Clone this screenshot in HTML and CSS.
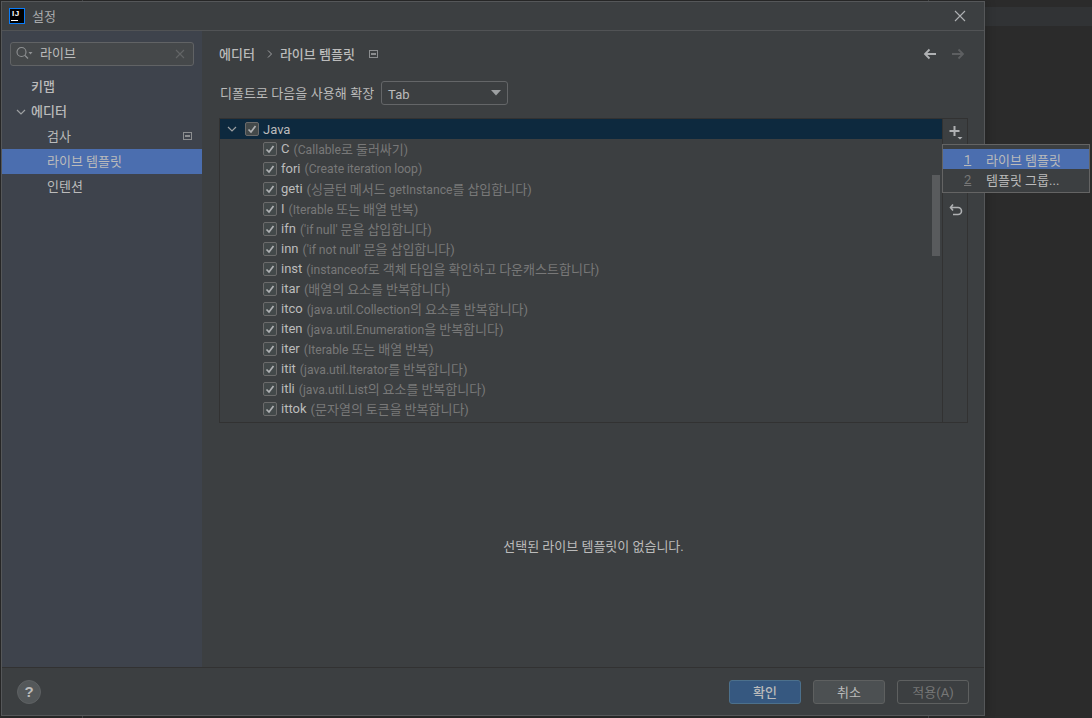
FILE: index.html
```html
<!DOCTYPE html>
<html lang="ko">
<head>
<meta charset="utf-8">
<title>설정</title>
<link rel="stylesheet" href="styles.css">
</head>
<body>
<div class="backdrop"><div class="bg-strip"></div><div class="bg-line left"></div><div class="bg-line right"></div></div>
<div class="dialog">
  <header class="titlebar">
    <div class="logo"><span class="logo-text">IJ</span><span class="logo-bar"></span></div>
    <span class="title">설정</span>
    <svg class="close" width="14" height="14" viewBox="0 0 14 14"><path d="M2 2l10 10M12 2L2 12" stroke="#afb1b3" stroke-width="1.1" fill="none"/></svg>
  </header>
  <div class="main">
    <aside class="sidebar">
      <div class="search">
        <svg width="20" height="16" viewBox="0 0 20 16"><circle cx="5.500" cy="6" r="4.500" stroke="#8f9193" stroke-width="1.100" fill="none"/><path d="M9 9.500l3 3" stroke="#8f9193" stroke-width="1.200"/><path d="M12.500 6h4l-2 2.400z" fill="#8f9193"/></svg>
        <span class="search-text">라이브</span>
        <svg class="search-clear" width="10" height="10" viewBox="0 0 10 10"><path d="M1 1l8 8M9 1L1 9" stroke="#636567" stroke-width="1.100"/></svg>
      </div>
      <nav class="nav">
        <div class="nav-item lvl0">키맵</div>
        <div class="nav-item lvl0"><svg class="nav-chev" width="10" height="6" viewBox="0 0 10 6"><path d="M1 1l4 4 4-4" stroke="#9da0a2" stroke-width="1.200" fill="none"/></svg>에디터</div>
        <div class="nav-item lvl1"><span>검사</span><svg class="nav-mark" width="9" height="8" viewBox="0 0 9 8"><rect x=".5" y=".5" width="8" height="7" fill="none" stroke="#8c8e90"/><rect x="2" y="3" width="5" height="2" fill="#8c8e90"/></svg></div>
        <div class="nav-item lvl1 selected">라이브 템플릿</div>
        <div class="nav-item lvl1">인텐션</div>
      </nav>
    </aside>
    <section class="content">
      <div class="crumbs">
        <span class="crumb">에디터</span>
        <svg class="crumb-sep" width="6" height="8" viewBox="0 0 6 8"><path d="M1 .5L4.500 4 1 7.500" stroke="#a0a2a4" fill="none"/></svg>
        <span class="crumb">라이브 템플릿</span>
        <svg class="crumb-mark" width="9" height="8" viewBox="0 0 9 8"><rect x=".5" y=".5" width="8" height="7" fill="none" stroke="#8c8e90"/><rect x="2" y="3" width="5" height="2" fill="#8c8e90"/></svg>
        <div class="history">
          <svg width="14" height="12" viewBox="0 0 14 12"><path d="M13 6H2M6.500 1.500L2 6l4.500 4.500" stroke="#afb1b3" stroke-width="1.800" fill="none"/></svg>
          <svg width="14" height="12" viewBox="0 0 14 12"><path d="M1 6h11M7.500 1.500L12 6l-4.500 4.500" stroke="#5d5f61" stroke-width="1.800" fill="none"/></svg>
        </div>
      </div>
      <div class="expand-row">
        <label class="expand-label">디폴트로 다음을 사용해 확장</label>
        <div class="combo"><span class="combo-value">Tab</span><svg width="10" height="6" viewBox="0 0 10 6"><path d="M0 0h10L5 5.500z" fill="#9da0a2"/></svg></div>
      </div>
      <div class="tree-panel">
        <div class="tree">
          <div class="tree-group">
            <svg class="tree-chev" width="10" height="6" viewBox="0 0 10 6"><path d="M1 1l4 4 4-4" stroke="#9da0a2" stroke-width="1.200" fill="none"/></svg>
            <span class="check"><svg width="10" height="9" viewBox="0 0 10 9"><path d="M1.500 4.500l2.500 2.500 4.500-6" stroke="#afb1b3" stroke-width="1.700" fill="none"/></svg></span>
            <span class="group-name">Java</span>
          </div>
          <div class="tree-row"><span class="check"><svg width="10" height="9" viewBox="0 0 10 9"><path d="M1.500 4.500l2.500 2.500 4.500-6" stroke="#afb1b3" stroke-width="1.700" fill="none"/></svg></span><span class="abbr">C</span><span class="desc"><span class="lat">(Callable</span>로 둘러싸기<span class="lat">)</span></span></div>
          <div class="tree-row"><span class="check"><svg width="10" height="9" viewBox="0 0 10 9"><path d="M1.500 4.500l2.500 2.500 4.500-6" stroke="#afb1b3" stroke-width="1.700" fill="none"/></svg></span><span class="abbr">fori</span><span class="desc"><span class="lat">(Create iteration loop)</span></span></div>
          <div class="tree-row"><span class="check"><svg width="10" height="9" viewBox="0 0 10 9"><path d="M1.500 4.500l2.500 2.500 4.500-6" stroke="#afb1b3" stroke-width="1.700" fill="none"/></svg></span><span class="abbr">geti</span><span class="desc">(싱글턴 메서드 <span class="lat">getInstance</span>를 삽입합니다)</span></div>
          <div class="tree-row"><span class="check"><svg width="10" height="9" viewBox="0 0 10 9"><path d="M1.500 4.500l2.500 2.500 4.500-6" stroke="#afb1b3" stroke-width="1.700" fill="none"/></svg></span><span class="abbr">I</span><span class="desc"><span class="lat">(Iterable</span> 또는 배열 반복)</span></div>
          <div class="tree-row"><span class="check"><svg width="10" height="9" viewBox="0 0 10 9"><path d="M1.500 4.500l2.500 2.500 4.500-6" stroke="#afb1b3" stroke-width="1.700" fill="none"/></svg></span><span class="abbr">ifn</span><span class="desc"><span class="lat">('if null'</span> 문을 삽입합니다)</span></div>
          <div class="tree-row"><span class="check"><svg width="10" height="9" viewBox="0 0 10 9"><path d="M1.500 4.500l2.500 2.500 4.500-6" stroke="#afb1b3" stroke-width="1.700" fill="none"/></svg></span><span class="abbr">inn</span><span class="desc"><span class="lat">('if not null'</span> 문을 삽입합니다)</span></div>
          <div class="tree-row"><span class="check"><svg width="10" height="9" viewBox="0 0 10 9"><path d="M1.500 4.500l2.500 2.500 4.500-6" stroke="#afb1b3" stroke-width="1.700" fill="none"/></svg></span><span class="abbr">inst</span><span class="desc"><span class="lat">(instanceof</span>로 객체 타입을 확인하고 다운캐스트합니다)</span></div>
          <div class="tree-row"><span class="check"><svg width="10" height="9" viewBox="0 0 10 9"><path d="M1.500 4.500l2.500 2.500 4.500-6" stroke="#afb1b3" stroke-width="1.700" fill="none"/></svg></span><span class="abbr">itar</span><span class="desc">(배열의 요소를 반복합니다)</span></div>
          <div class="tree-row"><span class="check"><svg width="10" height="9" viewBox="0 0 10 9"><path d="M1.500 4.500l2.500 2.500 4.500-6" stroke="#afb1b3" stroke-width="1.700" fill="none"/></svg></span><span class="abbr">itco</span><span class="desc"><span class="lat">(java.util.Collection</span>의 요소를 반복합니다)</span></div>
          <div class="tree-row"><span class="check"><svg width="10" height="9" viewBox="0 0 10 9"><path d="M1.500 4.500l2.500 2.500 4.500-6" stroke="#afb1b3" stroke-width="1.700" fill="none"/></svg></span><span class="abbr">iten</span><span class="desc"><span class="lat">(java.util.Enumeration</span>을 반복합니다)</span></div>
          <div class="tree-row"><span class="check"><svg width="10" height="9" viewBox="0 0 10 9"><path d="M1.500 4.500l2.500 2.500 4.500-6" stroke="#afb1b3" stroke-width="1.700" fill="none"/></svg></span><span class="abbr">iter</span><span class="desc"><span class="lat">(Iterable</span> 또는 배열 반복)</span></div>
          <div class="tree-row"><span class="check"><svg width="10" height="9" viewBox="0 0 10 9"><path d="M1.500 4.500l2.500 2.500 4.500-6" stroke="#afb1b3" stroke-width="1.700" fill="none"/></svg></span><span class="abbr">itit</span><span class="desc"><span class="lat">(java.util.Iterator</span>를 반복합니다)</span></div>
          <div class="tree-row"><span class="check"><svg width="10" height="9" viewBox="0 0 10 9"><path d="M1.500 4.500l2.500 2.500 4.500-6" stroke="#afb1b3" stroke-width="1.700" fill="none"/></svg></span><span class="abbr">itli</span><span class="desc"><span class="lat">(java.util.List</span>의 요소를 반복합니다)</span></div>
          <div class="tree-row"><span class="check"><svg width="10" height="9" viewBox="0 0 10 9"><path d="M1.500 4.500l2.500 2.500 4.500-6" stroke="#afb1b3" stroke-width="1.700" fill="none"/></svg></span><span class="abbr">ittok</span><span class="desc">(문자열의 토큰을 반복합니다)</span></div>
          <div class="scrollbar"></div>
        </div>
        <div class="tools">
          <svg class="tool-add" width="14" height="15" viewBox="0 0 14 15"><path d="M5.500 1v10M.5 6h10" stroke="#afb1b3" stroke-width="2" fill="none"/><path d="M8.500 12h5l-2.500 2.500z" fill="#afb1b3"/></svg>
          <svg class="tool-undo" width="14" height="14" viewBox="0 0 14 14"><path d="M4 1.500L1.500 4.500 4 7.500M2 4.500h7a3.500 3.500 0 0 1 0 7H4" stroke="#afb1b3" stroke-width="1.600" fill="none"/></svg>
        </div>
      </div>
      <div class="empty">선택된 라이브 템플릿이 없습니다.</div>
    </section>
  </div>
  <footer class="footer">
    <div class="help">?</div>
    <div class="buttons">
      <div class="btn primary">확인</div>
      <div class="btn">취소</div>
      <div class="btn disabled">적용(A)</div>
    </div>
  </footer>
</div>
<div class="popup">
  <div class="popup-item active"><span class="popup-key">1</span><span>라이브 템플릿</span></div>
  <div class="popup-item"><span class="popup-key dim">2</span><span>템플릿 그룹...</span></div>
</div>
</body>
</html>
```
FILE: styles.css
```css
* { box-sizing: border-box; }
html, body { margin: 0; height: 100%; overflow: hidden; background: #2b2b2b; }
body { font-family: "Roboto", "Noto Sans CJK KR", sans-serif; font-size: 13px; color: #bbbbbb; }
.backdrop { position: absolute; inset: 0; }
.bg-strip { position: absolute; left: 985px; right: 0; top: 7px; height: 19px; background: #313335; }
.bg-line { position: absolute; top: 0; bottom: 0; width: 1px; background: #4a4c4e; }
.bg-line.left { left: 82px; }
.bg-line.right { left: 928px; }
.dialog { position: absolute; left: 1px; top: 1px; width: 984px; height: 715px; background: #3c3f41; border: 1px solid #555759; display: flex; flex-direction: column; box-shadow: 0 0 10px rgba(0,0,0,.25); }
.titlebar { height: 29px; flex: none; display: flex; align-items: center; padding: 0 17px 0 7px; border-bottom: 1px solid #515355; gap: 7px; }
.logo { width: 16px; height: 16px; background: #000; border: 1px solid #087cfa; position: relative; color: #fff; }
.logo-text { position: absolute; left: 2px; top: 0; font: bold 8px/9px "Liberation Sans", sans-serif; letter-spacing: .5px; }
.logo-bar { position: absolute; left: 1px; top: 11px; width: 7px; height: 1px; background: #fff; }
.title { flex: 1; color: #a9abad; padding-bottom: 2px; }
.main { flex: 1; display: flex; min-height: 0; }
.sidebar { width: 200px; flex: none; background: #3e434c; padding-top: 11px; }
.search { margin: 0 8px; height: 24px; border: 1px solid #616365; border-radius: 3px; background: #45484a; display: flex; align-items: center; padding-left: 5px; gap: 4px; }
.search-text { flex: 1; color: #bbbbbb; padding-bottom: 3px; }
.search-clear { margin-right: 8px; }
.nav { margin-top: 8px; }
.nav-item { height: 25px; display: flex; align-items: center; color: #bbbbbb; padding-bottom: 3px; }
.lvl0 { padding-left: 29px; position: relative; font-weight: 500; }
.lvl1 { padding-left: 45px; padding-right: 10px; justify-content: space-between; }
.nav-chev { position: absolute; left: 14px; top: 10px; }
.nav-mark { position: relative; top: 1px; }
.selected { background: #4b6eaf; padding-bottom: 2px; }
.content { flex: 1; min-width: 0; padding: 0 16px 0 17px; display: flex; flex-direction: column; }
.crumbs { height: 26px; margin-top: 10px; display: flex; align-items: center; gap: 12px; }
.crumb { font-weight: 500; color: #bbbbbb; margin-bottom: 2px; }
.crumb-sep { margin-right: -5px; }
.crumb-mark { margin-left: 2px; }
.history { margin-left: auto; display: flex; gap: 14px; padding-right: 3px; }
.expand-row { margin-top: 14px; height: 24px; display: flex; align-items: center; gap: 7px; }
.expand-label { color: #bbbbbb; margin-left: 1px; word-spacing: .3px; margin-bottom: 1px; }
.combo { width: 127px; height: 24px; border: 1px solid #646668; border-radius: 3px; background: #3c3f41; display: flex; align-items: center; justify-content: space-between; padding: 0 6px 0 6px; }
.combo-value { margin-top: 2px; }
.tree-panel { margin-top: 13px; height: 305px; flex: none; display: flex; border: 1px solid #323232; }
.tree { flex: 1; position: relative; overflow: hidden; }
.tree-group { height: 20px; background: #0d293e; display: flex; align-items: center; padding-left: 7px; color: #bbbbbb; }
.tree-chev { margin-right: 8px; }
.group-name { margin-left: 4px; }
.check { width: 14px; height: 14px; flex: none; border: 1px solid #6b6b6b; border-radius: 2px; background: #43494a; display: inline-flex; align-items: center; justify-content: center; }
.tree-row { height: 20px; display: flex; align-items: center; padding-left: 43px; white-space: pre; }
.abbr { margin-left: 4px; margin-bottom: 2px; color: #bbbbbb; }
.desc { margin-left: 4px; margin-bottom: 2px; color: #787878; word-spacing: -.3px; }
.lat { font-size: 12.2px; }
.scrollbar { position: absolute; right: 2px; top: 56px; width: 8px; height: 81px; background: #595b5d; }
.tools { width: 25px; flex: none; border-left: 1px solid #323232; position: relative; }
.tool-add { position: absolute; left: 6px; top: 6px; }
.tool-undo { position: absolute; left: 6px; top: 84px; }
.empty { flex: 1; display: flex; align-items: center; justify-content: center; color: #bbbbbb; }
.footer { height: 48px; flex: none; border-top: 1px solid #323232; display: flex; align-items: center; justify-content: space-between; padding: 0 15px; }
.help { width: 24px; height: 24px; border-radius: 50%; background: #54585a; border: 1px solid #5e6163; color: #bbbbbb; display: flex; align-items: center; justify-content: center; font: bold 15px "Liberation Sans", sans-serif; }
.buttons { display: flex; gap: 12px; }
.btn { width: 72px; height: 24px; border: 1px solid #5e6060; border-radius: 3px; background: #4c5052; display: flex; align-items: center; justify-content: center; color: #bbbbbb; }
.primary { background: #365880; border-color: #4c708c; font-weight: 500; }
.disabled { background: transparent; border-color: #5e6060; color: #777777; }
.popup { position: absolute; left: 942px; top: 144px; width: 148px; height: 49px; border: 1px solid #646464; background: #3c3f41; padding-top: 4px; }
.popup-item { height: 20px; display: flex; align-items: center; color: #bbbbbb; }
.popup-key { width: 43px; padding-left: 21px; text-decoration: underline; color: #bbbbbb; }
.dim { color: #777777; }
.active { background: #4b6eaf; }
```
